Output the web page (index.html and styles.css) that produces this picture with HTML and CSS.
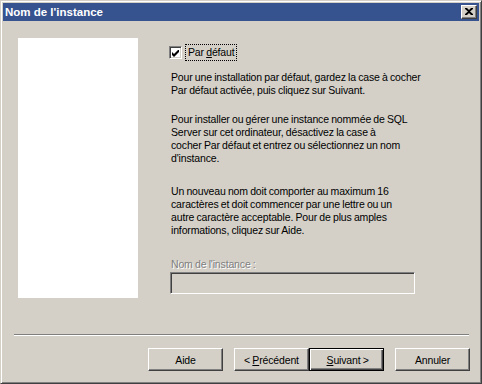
FILE: index.html
```html
<!DOCTYPE html>
<html lang="fr">
<head>
    <meta charset="UTF-8">
    <title>Nom de l'instance</title>
    <link rel="stylesheet" href="styles.css">
</head>
<body>

    <div class="window">
        <!-- barre de titre -->
        <div class="titlebar">
            <span class="title">Nom de l'instance</span>
            <span class="close-btn">
                <svg width="8" height="7" viewBox="0 0 8 7">
                    <path d="M0 0h2l2 2 2-2h2v1L5 3.5 8 6v1H6L4 5 2 7H0V6l3-2.5L0 1z" fill="#000"/>
                </svg>
            </span>
        </div>

        <!-- contenu -->
        <div class="content">
            <div class="side-panel"></div>
            <div class="main">
                <label class="check-row">
                    <span class="checkbox">
                        <svg width="7" height="7" viewBox="0 0 7 7">
                            <path d="M0 2l2 2 5-5v3L2 7 0 5z" fill="#000"/>
                        </svg>
                    </span>
                    <span class="check-label">Par <u>d</u>éfaut</span>
                </label>

                <p>Pour une installation par défaut, gardez la case à cocher<br>Par défaut activée, puis cliquez sur Suivant.</p>
                <p class="para-2">Pour installer ou gérer une instance nommée de SQL<br>Server sur cet ordinateur, désactivez la case à<br>cocher Par défaut et entrez ou sélectionnez un nom<br>d'instance.</p>
                <p class="para-3">Un nouveau nom doit comporter au maximum 16<br>caractères et doit commencer par une lettre ou un<br>autre caractère acceptable. Pour de plus amples<br>informations, cliquez sur Aide.</p>

                <div class="field-label">Nom de l'instance :</div>
                <div class="field-input"></div>
            </div>
        </div>

        <div class="separator"></div>

        <!-- boutons -->
        <div class="buttons">
            <span class="btn">Aide</span>
            <span class="btn btn-prev">&lt;&nbsp;<u>P</u>récédent</span>
            <span class="btn btn-default">&nbsp;<u>S</u>uivant&nbsp;&gt;</span>
            <span class="btn btn-cancel">Annuler</span>
        </div>
    </div>

</body>
</html>
```

FILE: styles.css
```css
/* --- couleurs classiques --- */
:root {
    --face: #d4d0c8;
    --light: #ffffff;
    --shadow: #808080;
    --dark: #404040;
    --title-bg: #36538f;
}

body {
    margin: 0;
    font-family: 'Liberation Sans', Arial, sans-serif;
    font-size: 10.5px;
    letter-spacing: -0.15px;
    word-spacing: -0.5px;
    color: #000;
}

.window {
    width: 482px;
    height: 384px;
    box-sizing: border-box;
    background-color: var(--face);
    border: 1px solid;
    border-color: var(--face) var(--dark) var(--dark) var(--face);
    box-shadow: inset 1px 1px var(--light), inset -1px -1px var(--shadow);
    padding: 2px;
    display: flex;
    flex-direction: column;
}

/* --- barre de titre --- */
.titlebar {
    height: 18px;
    background-color: var(--title-bg);
    display: flex;
    align-items: center;
    justify-content: space-between;
    padding: 0 2px 0 2px;
}

.title {
    color: #fff;
    font-family: 'Liberation Sans', Arial, sans-serif;
    font-weight: 700;
    font-size: 11.5px;
    letter-spacing: 0;
    word-spacing: 0;
}

.close-btn {
    width: 16px;
    height: 14px;
    box-sizing: border-box;
    background-color: var(--face);
    border: 1px solid;
    border-color: var(--light) var(--dark) var(--dark) var(--light);
    box-shadow: inset -1px -1px var(--shadow);
    display: flex;
    align-items: center;
    justify-content: center;
    padding: 0 1px 1px 0;
}

/* --- contenu --- */
.content {
    display: flex;
    padding: 17px 0 0 15px;
    height: 260px;
}

.side-panel {
    width: 120px;
    height: 260px;
    background-color: #fff;
}

.main {
    margin-left: 31px;
    width: 260px;
    white-space: nowrap;
}

.check-row {
    display: flex;
    align-items: center;
    height: 17px;
    margin-top: 6px;
}

.checkbox {
    width: 13px;
    height: 13px;
    box-sizing: border-box;
    background-color: #fff;
    border: 1px solid;
    border-color: var(--shadow) var(--light) var(--light) var(--shadow);
    box-shadow: inset 1px 1px var(--dark), inset -1px -1px var(--face);
    display: flex;
    align-items: center;
    justify-content: center;
    padding-top: 1px;
}

.check-label {
    margin-left: 4px;
    padding: 1px 2px;
    outline: 1px dotted #000;
    line-height: 13px;
}

p {
    margin: 10px 0 0 2px;
    line-height: 13px;
}

.para-2 {
    margin-top: 16px;
}

.para-3 {
    margin-top: 20px;
}

.field-label {
    margin: 21px 0 0 2px;
    color: var(--shadow);
    text-shadow: 1px 1px var(--light);
    line-height: 13px;
}

.field-input {
    margin: 1px 0 0 1px;
    width: 245px;
    height: 22px;
    box-sizing: border-box;
    border: 1px solid;
    border-color: var(--shadow) var(--light) var(--light) var(--shadow);
    box-shadow: inset 1px 1px var(--dark), inset -1px -1px var(--face);
}

/* --- séparateur et boutons --- */
.separator {
    margin: 36px 10px 0 11px;
    border-top: 1px solid var(--shadow);
    border-bottom: 1px solid var(--light);
}

.buttons {
    display: flex;
    justify-content: flex-end;
    padding: 12px 9px 0 0;
}

.btn {
    width: 75px;
    height: 23px;
    box-sizing: border-box;
    border: 1px solid;
    border-color: var(--light) var(--dark) var(--dark) var(--light);
    box-shadow: inset -1px -1px var(--shadow);
    display: flex;
    align-items: center;
    justify-content: center;
    margin-left: 11px;
}

.btn-default {
    margin-left: 0;
    border: 1px solid #000;
    box-shadow: inset 1px 1px var(--light), inset -1px -1px var(--dark), inset -2px -2px var(--shadow);
}
```
